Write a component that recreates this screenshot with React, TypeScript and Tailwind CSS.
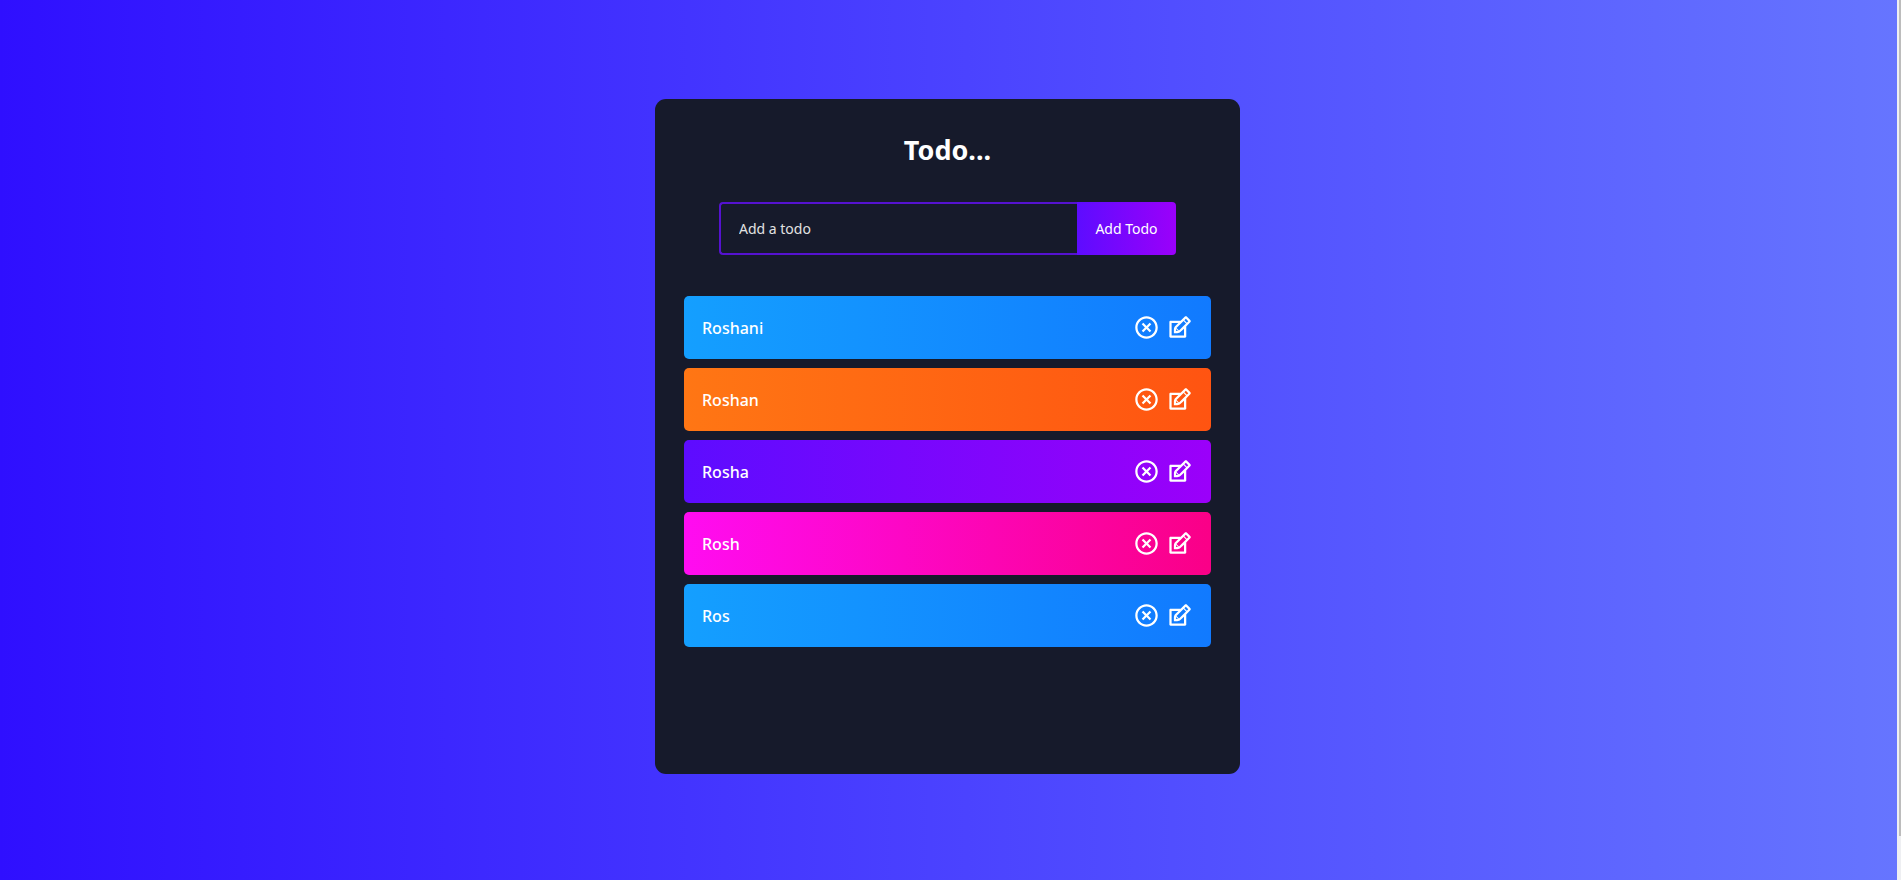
import { useState, type FormEvent } from 'react';
import { RiCloseCircleLine } from 'react-icons/ri';
import { TiEdit } from 'react-icons/ti';

type Todo = { id: number; text: string };

const initialTodos: Todo[] = [
  { id: 1, text: 'Roshani' },
  { id: 2, text: 'Roshan' },
  { id: 3, text: 'Rosha' },
  { id: 4, text: 'Rosh' },
  { id: 5, text: 'Ros' },
];

const rowGradients = [
  'bg-[linear-gradient(90deg,#149fff_0%,#117aff_100%)]',
  'bg-[linear-gradient(90deg,#ff7614_0%,#ff5411_100%)]',
  'bg-[linear-gradient(90deg,#5d0cff_0%,#9b00fa_100%)]',
  'bg-[linear-gradient(90deg,#ff0cf1_0%,#fa0087_100%)]',
];

function TodoForm({ onAdd }: { onAdd: (text: string) => void }) {
  const [value, setValue] = useState('');

  const submit = (e: FormEvent) => {
    e.preventDefault();
    if (value.trim()) onAdd(value.trim());
    setValue('');
  };

  return (
    <form onSubmit={submit} className="mx-[35px] mb-[41px] flex h-[53px]">
      <input
        type="text"
        aria-label="Add a todo"
        placeholder="Add a todo"
        value={value}
        onChange={(e) => setValue(e.target.value)}
        className="min-w-0 flex-1 rounded-l border-2 border-r-0 border-[#5512d0] bg-transparent px-[18px] text-sm text-white outline-none placeholder:text-[#e2e2e2]"
      />
      <button
        type="submit"
        className="w-[99px] cursor-pointer rounded-r bg-[linear-gradient(90deg,#5d0cff_0%,#9b00fa_100%)] text-sm text-white"
      >
        Add Todo
      </button>
    </form>
  );
}

export default function App() {
  const [todos, setTodos] = useState(initialTodos);

  const add = (text: string) => setTodos([{ id: Date.now(), text }, ...todos]);
  const remove = (id: number) => setTodos(todos.filter((t) => t.id !== id));
  const edit = (id: number) => {
    const text = window.prompt('Update your item');
    if (text) setTodos(todos.map((t) => (t.id === id ? { ...t, text } : t)));
  };

  return (
    <div className="flex min-h-screen font-['Noto_Sans',sans-serif]">
      <div className="flex-1 bg-[linear-gradient(90deg,#2f0fff_0%,#6675ff_100%)] py-[99px] pl-4 pr-[18px]">
        <main className="mx-auto min-h-[675px] w-full max-w-[585px] rounded-[11px] bg-[#161a2b] px-[29px] pb-9 pt-[31px]">
          <h1 className="mb-8 text-center text-[27px] font-bold leading-10 text-white">Todo...</h1>
          <TodoForm onAdd={add} />
          <ul className="flex flex-col gap-[9px]">
            {todos.map((todo, i) => (
              <li
                key={todo.id}
                className={`flex h-[63px] items-center justify-between rounded-[5px] px-[18px] text-base font-medium text-white ${rowGradients[i % 4]}`}
              >
                <span>{todo.text}</span>
                <span className="flex items-center gap-[6px] text-[27px]">
                  <button type="button" aria-label="Delete todo" onClick={() => remove(todo.id)} className="cursor-pointer">
                    <RiCloseCircleLine />
                  </button>
                  <button type="button" aria-label="Edit todo" onClick={() => edit(todo.id)} className="cursor-pointer">
                    <TiEdit />
                  </button>
                </span>
              </li>
            ))}
          </ul>
        </main>
      </div>
      <div className="w-1 bg-[#eeeff2] pb-11" aria-hidden="true">
        <div className="ml-auto h-full w-0.5 bg-[#bcbcbc]" />
      </div>
    </div>
  );
}
